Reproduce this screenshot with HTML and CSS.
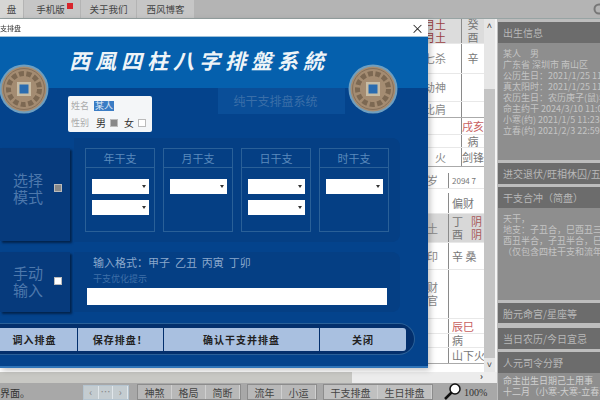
FILE: index.html
```html
<!DOCTYPE html>
<html lang="zh-CN">
<head>
    <meta charset="UTF-8">
    <title>西风四柱八字排盘系统</title>
    <link rel="stylesheet" href="styles.css">
</head>
<body>
    <svg class="defs" width="0" height="0">
        <defs>
            <symbol id="coin" viewBox="0 0 50 50">
                <circle cx="25" cy="25" r="24.500" fill="#6f9fc0"/>
                <circle cx="25" cy="25" r="22.500" fill="#a48c72"/>
                <circle cx="25" cy="25" r="20.500" fill="none" stroke="#86705a" stroke-width="1"/>
                <circle cx="25" cy="25" r="15.500" fill="none" stroke="#7c6852" stroke-width="5" stroke-dasharray="5 2.500"/>
                <circle cx="25" cy="25" r="11" fill="#a48c72"/>
                <rect x="18" y="18" width="14" height="14" fill="#c8bca4"/>
                <rect x="20.500" y="20.500" width="9" height="9" fill="#2a6cb0"/>
            </symbol>
        </defs>
    </svg>

    <div class="app">
        <nav class="tabs">
            <span class="tab tab-first">盘</span>
            <span class="tab tab-phone">手机版<i class="hot"></i></span>
            <span class="tab tab-about">关于我们</span>
            <span class="tab tab-blog">西风博客</span>
            <svg class="gear" width="8" height="12" viewBox="0 0 8 12">
                <circle cx="7" cy="6" r="4.500" fill="none" stroke="#777" stroke-width="2"/>
            </svg>
        </nav>

        <div class="columns">
            <div class="work">
                <main class="main">
                    <div class="sheet">
                        <div class="chart">
                            <div class="row row-head"><span class="cell-a">月土<br>月土</span><span class="cell-b">癸<br>酉</span></div>
                            <div class="row row-1"><span class="cell-a">七杀</span><span class="cell-b">辛</span></div>
                            <div class="row row-2"><span class="cell-a">劫神</span><span class="cell-b"></span></div>
                            <div class="row row-3"><span class="cell-a">比肩</span><span class="cell-b"></span></div>
                            <div class="row row-4"><span class="cell-a"></span><span class="cell-b red">戌亥</span></div>
                            <div class="row row-5"><span class="cell-a"></span><span class="cell-b">病</span></div>
                            <div class="row row-6"><span class="cell-a">火</span><span class="cell-b">剑锋</span></div>
                        </div>
                        <div class="chart chart-low">
                            <div class="row row-year"><span class="cell-a">岁</span><span class="cell-b small">2094 7</span></div>
                            <div class="row row-7"><span class="cell-a"></span><span class="cell-b">偏财</span></div>
                            <div class="row row-8"><span class="cell-a">土</span><span class="cell-b split">丁<br>酉<em>阴<br>阴</em></span></div>
                            <div class="row row-9"><span class="cell-a">印</span><span class="cell-b">辛 桑</span></div>
                            <div class="row row-10"><span class="cell-a">财<br>官</span><span class="cell-b"></span></div>
                            <div class="row row-11"><span class="cell-a"></span><span class="cell-b red">辰巳</span></div>
                            <div class="row row-12"><span class="cell-a"></span><span class="cell-b">病</span></div>
                            <div class="row row-13"><span class="cell-a"></span><span class="cell-b">山下火</span></div>
                        </div>
                    </div>
                    <div class="vscroll"><b>˄</b><i></i><b>˅</b></div>
                </main>

                <div class="hscroll"><i></i><b>›</b></div>

                <footer class="status">
                    <span class="status-msg">界面。</span>
                    <div class="pager"><span>‹</span><span>…</span><span>›</span></div>
                    <div class="btn-group group-a"><span>神煞</span><span>格局</span><span>简断</span></div>
                    <div class="btn-group group-b"><span>流年</span><span>小运</span></div>
                    <div class="btn-group group-c"><span>干支排盘</span><span>生日排盘</span></div>
                    <svg class="zoom-icon" width="18" height="17" viewBox="0 0 18 17">
                        <line x1="1" y1="16" x2="8" y2="9" stroke="#111" stroke-width="2.500"/>
                        <circle cx="11" cy="6" r="5" fill="#fff" stroke="#111" stroke-width="1.500"/>
                    </svg>
                    <span class="zoom-value">100%</span>
                </footer>
            </div>

            <aside class="side">
                <section class="group">
                    <h3>出生信息</h3>
                    <div class="group-text birth">
                        某人　男<br>
                        广东省 深圳市 南山区<br>
                        公历生日：2021/1/25 11:00<br>
                        真太阳时：2021/1/25 11:00<br>
                        农历生日：农历庚子(鼠)年<br>
                        命主约干 2024/3/10 11:00<br>
                        小寒(约) 2021/1/5 11:23<br>
                        立春(约) 2021/2/3 22:59
                    </div>
                </section>
                <section class="group bar"><h3>进交退伏/旺相休囚/五行</h3></section>
                <section class="group">
                    <h3>干支合冲（简盘）</h3>
                    <div class="group-text clash">
                        天干，<br>
                        地支：子丑合，巳酉丑三合<br>
                        酉丑半合，子丑半合，巳<br>
                        （仅包含四柱干支和流年）
                    </div>
                </section>
                <section class="group bar bar-gap"><h3>胎元命宫/星座等</h3></section>
                <section class="group bar"><h3>当日农历/今日宜忌</h3></section>
                <section class="group">
                    <h3>人元司令分野</h3>
                    <div class="group-text fate">
                        命主出生日期己土用事<br>
                        十二月（小寒-大寒-立春）
                    </div>
                </section>
            </aside>
        </div>
    </div>

    <!-- 排盘窗口 -->
    <div class="dialog">
        <div class="dialog-title"><span>支排盘</span><span class="dialog-close">×</span></div>
        <div class="dialog-body">
            <svg class="coin coin-left"><use href="#coin"/></svg>
            <svg class="coin coin-right"><use href="#coin"/></svg>

            <header class="banner"><h1>西風四柱八字排盤系統</h1></header>

            <div class="info-row">
                <div class="person">
                    <div class="person-line"><label>姓名</label><span class="person-name">某人</span></div>
                    <div class="person-line"><label>性别</label><span class="gender">男<i class="check on"></i>女<i class="check"></i></span></div>
                </div>
                <div class="mode-name">纯干支排盘系统</div>
            </div>

            <div class="mode-row mode-select">
                <div class="mode-tile"><span>选择<br>模式</span><i class="check on"></i></div>
                <div class="mode-panel pillars">
                    <div class="pillar"><h4>年干支</h4><div class="pillar-body"><div class="select"></div><div class="select"></div></div></div>
                    <div class="pillar"><h4>月干支</h4><div class="pillar-body"><div class="select"></div></div></div>
                    <div class="pillar"><h4>日干支</h4><div class="pillar-body"><div class="select"></div><div class="select"></div></div></div>
                    <div class="pillar"><h4>时干支</h4><div class="pillar-body"><div class="select"></div></div></div>
                </div>
            </div>

            <div class="mode-row mode-manual">
                <div class="mode-tile"><span>手动<br>输入</span><i class="check"></i></div>
                <div class="mode-panel manual">
                    <p class="format">输入格式：甲子&nbsp; 乙丑&nbsp; 丙寅&nbsp; 丁卯</p>
                    <p class="hint">干支优化提示</p>
                    <div class="text-input"></div>
                </div>
            </div>

            <div class="actions">
                <button class="act-load">调入排盘</button>
                <button class="act-save">保存排盘！</button>
                <button class="act-ok">确认干支并排盘</button>
                <button class="act-close">关闭</button>
            </div>
        </div>
    </div>
</body>
</html>
```

FILE: styles.css
```css
* {
    box-sizing: border-box;
}
html, body {
    margin: 0;
    height: 100%;
}
body {
    width: 600px;
    height: 400px;
    overflow: hidden;
    position: relative;
    font-family: "Noto Sans CJK SC", "Liberation Sans", sans-serif;
    background-color: #a8a8a8;
    filter: blur(0.5px);
}
.defs {
    position: absolute;
}
.app {
    display: flex;
    flex-direction: column;
    height: 400px;
}
.columns {
    display: flex;
    height: 381px;
}
.work {
    display: flex;
    flex-direction: column;
    width: 497px;
}

/* top tabs */
.tabs {
    display: flex;
    height: 19px;
    background-color: #b4b4b4;
    border-bottom: 1px solid #98a4a4;
}
.tab {
    display: flex;
    align-items: center;
    justify-content: center;
    height: 18px;
    margin-right: 1px;
    font-size: 9.5px;
    color: #444;
    background-color: #c6c6c6;
}
.tab-first { width: 23px; background-color: #d6d6d4; }
.tab-phone { width: 56px; padding-left: 5px; }
.tab-about { width: 55px; }
.tab-blog { width: 57px; }
.hot {
    width: 6px;
    height: 6px;
    margin: -6px 0 0 2px;
    background-color: #d8242c;
}
.gear {
    margin: 3px 0 0 auto;
}

/* sheet behind the dialog */
.main {
    display: flex;
    height: 353px;
    padding-left: 428px;
    background-color: #fff;
}
.sheet {
    width: 56px;
    background-color: #fff;
    font-size: 11px;
    color: #777;
    overflow: hidden;
}
.chart {
    border-bottom: 1px solid #aaa;
    margin-bottom: 6px;
}
.row {
    display: flex;
    border-bottom: 1px solid #e8e8e8;
    line-height: 13px;
    align-items: center;
}
.cell-a {
    width: 33px;
    height: 100%;
    display: flex;
    align-items: center;
    justify-content: flex-end;
    padding-right: 15px;
    text-align: right;
    font-size: 11px;
    color: #888;
    white-space: nowrap;
    overflow: hidden;
}
.cell-b {
    width: 23px;
    height: 100%;
    display: flex;
    align-items: center;
    justify-content: center;
    border-left: 1px solid #8a8a8a;
    text-align: center;
    overflow: hidden;
    white-space: nowrap;
}
.row-head { height: 25px; background-color: #dcdcdc; }
.row-head .cell-a { color: #9a4040; }
.row-1 { height: 30px; }
.row-2 { height: 28px; }
.row-3 { height: 16px; border-bottom-color: #aaa; }
.row-4 { height: 17px; }
.row-5 { height: 13px; }
.row-6 { height: 18px; border-bottom: 0; }
.red { color: #c86060; }
.chart-low .cell-a { width: 20px; padding-right: 10px; }
.chart-low .cell-b { width: 36px; padding-left: 3px; justify-content: flex-start; }
.small { font-size: 8px; }
.row-year { height: 16px; }
.row-7 { height: 25px; padding-top: 4px; }
.row-8 { height: 29px; background-color: #d8d8d8; }
.split em {
    font-style: normal;
    color: #a85a5a;
    margin-left: 8px;
}
.row-9 { height: 27px; }
.row-10 { height: 49px; }
.row-11 { height: 15px; }
.row-12 { height: 14px; }
.row-13 { height: 15px; border-bottom: 0; }

.vscroll {
    display: flex;
    flex-direction: column;
    width: 13px;
    background-color: #e6e6e6;
    border-right: 2px solid #f4f4f4;
    font-size: 9px;
    text-align: center;
}
.vscroll b {
    height: 14px;
    font-weight: 400;
    color: #444;
}
.vscroll i {
    display: block;
    height: 273px;
    margin-top: 56px;
    background-color: #c4c4c4;
}
.vscroll b:last-child {
    margin-top: auto;
}

/* side column */
.side {
    display: flex;
    flex-direction: column;
    width: 103px;
    height: 381px;
    padding: 3px 0 0 1px;
    background-color: #bdbdbd;
    overflow: hidden;
}
.group {
    margin-bottom: 3px;
    flex-shrink: 0;
}
.group h3 {
    margin: 0;
    height: 21px;
    padding-left: 5px;
    font-size: 10px;
    line-height: 21px;
    font-weight: 400;
    color: #b8b8b8;
    background-color: #6c6c6c;
    white-space: nowrap;
    overflow: hidden;
}
.bar-gap {
    margin-bottom: 5px;
}
.bar-gap h3 {
    height: 20px;
}
.group-text {
    padding: 5px 0 0 5px;
    font-size: 9px;
    line-height: 11px;
    color: #c4c4c4;
    background-color: #8e8e8e;
    white-space: nowrap;
    overflow: hidden;
}
.birth { height: 117px; }
.clash { height: 92px; }
.fate { height: 27px; padding-top: 2px; color: #d0d0d0; }

.hscroll {
    display: flex;
    justify-content: space-between;
    height: 11px;
    background-color: #ececec;
    font-size: 9px;
    line-height: 10px;
}
.hscroll i {
    display: block;
    width: 352px;
    background-color: #c8c8c4;
}
.hscroll b {
    margin-right: 14px;
    color: #444;
}

/* status bar */
.status {
    display: flex;
    align-items: flex-end;
    height: 17px;
    font-size: 10px;
    color: #333;
    background-color: #a8a8a8;
}
.status-msg {
    width: 83px;
    line-height: 15px;
}
.pager {
    display: flex;
    width: 46px;
    height: 15px;
    margin-right: 8px;
    background-color: #c4ccd0;
    border: 1px solid #b4c4d0;
}
.pager span {
    flex: 1;
    text-align: center;
    line-height: 12px;
    color: #888;
    border-right: 1px solid #e0e6ea;
}
.btn-group {
    display: flex;
    height: 16px;
    margin-right: 6px;
    border: 1px solid #8c8c8c;
    background-color: #b8b8b8;
}
.btn-group span {
    line-height: 15px;
    color: #444;
    border-right: 1px solid #d0d0d0;
    text-align: center;
}
.group-a span { width: 34px; }
.group-b span { width: 34px; }
.group-c span { width: 54px; background-color: #c0c0c0; }
.zoom-icon {
    margin: 0 2px 0 5px;
}
.zoom-value {
    font-family: "Liberation Serif", serif;
    font-size: 10px;
    line-height: 15px;
}

/* dialog, it lies over the page */
.dialog {
    position: absolute;
    left: 0;
    top: 19px;
    width: 428px;
    height: 349px;
    box-shadow: 2px 2px 6px rgba(0, 0, 0, 0.25);
}
.dialog-title {
    display: flex;
    justify-content: space-between;
    align-items: center;
    height: 18px;
    padding-right: 4px;
    font-size: 7px;
    color: #333;
    background-color: #fff;
    border-bottom: 1px solid #9fc0d8;
}
.dialog-close {
    font-size: 13px;
    color: #222;
}
.dialog-body {
    position: relative;
    height: 331px;
    background-color: #04438c;
    border-bottom: 2px solid #2f74b8;
}
.coin {
    position: absolute;
    top: 27px;
    width: 50px;
    height: 50px;
}
.coin-left { left: -1px; }
.coin-right { left: 348px; }
.banner {
    height: 51px;
    background-color: #0560ad;
}
.banner h1 {
    margin: 0;
    padding: 8px 30px 0 0;
    text-align: center;
    font-size: 21px;
    line-height: 30px;
    font-weight: 700;
    font-style: italic;
    letter-spacing: 5px;
    color: #eef4f8;
}
.info-row {
    display: flex;
    align-items: flex-start;
    height: 60px;
    padding-left: 68px;
}
.person {
    width: 84px;
    height: 36px;
    margin-top: 8px;
    padding: 1px 0 0 3px;
    background-color: #f4f6f8;
    border-radius: 2px;
}
.person-line {
    display: flex;
    align-items: center;
    height: 17px;
    font-size: 10px;
}
.person-line label {
    width: 21px;
    color: #aaa;
    font-size: 9px;
}
.person-name {
    padding: 0 1px;
    margin-left: 2px;
    line-height: 10px;
    font-size: 9px;
    color: #e0eaf4;
    background-color: #3a7cc4;
}
.gender {
    display: flex;
    align-items: center;
    margin-left: 6px;
    color: #333;
}
.check {
    display: block;
    width: 8px;
    height: 8px;
    margin: 0 6px 0 4px;
    background-color: #fff;
    border: 1px solid #bbb;
}
.check.on {
    background-color: #888;
}
.mode-name {
    width: 127px;
    height: 26px;
    margin-left: 66px;
    padding-right: 12px;
    text-align: center;
    font-size: 12px;
    line-height: 26px;
    color: #3a6ea8;
    background-color: #0a4e98;
}
.mode-row {
    display: flex;
}
.mode-select {
    height: 104px;
}
.mode-manual {
    height: 71px;
}
.mode-tile {
    display: flex;
    align-items: center;
    gap: 11px;
    width: 70px;
    padding-left: 13px;
    font-size: 15px;
    line-height: 17px;
    text-align: center;
    color: #4d78ac;
    background-color: #063a7c;
    box-shadow: 2px 2px 2px #02244e;
}
.mode-select .mode-tile { height: 93px; padding-bottom: 14px; }
.mode-manual .mode-tile { height: 60px; padding-bottom: 3px; }
.mode-tile .check {
    margin: 0;
    flex-shrink: 0;
}
.mode-panel {
    width: 326px;
    margin-left: 4px;
    background-color: #053f84;
    border-radius: 0 8px 8px 0;
}
.pillars {
    display: flex;
    gap: 8px;
    height: 104px;
    margin-top: -10px;
    padding: 10px 0 0 11px;
}
.pillar {
    width: 70px;
    height: 84px;
    border: 1px solid #2a6098;
}
.pillar h4 {
    margin: 0;
    height: 19px;
    text-align: center;
    font-size: 11px;
    line-height: 19px;
    font-weight: 400;
    color: #5a8abc;
    border-bottom: 1px solid #2a6098;
}
.pillar-body {
    padding: 11px 0 0 6px;
}
.select {
    position: relative;
    width: 57px;
    height: 15px;
    margin-bottom: 6px;
    background-color: #fff;
}
.select::after {
    content: "";
    position: absolute;
    right: 3px;
    top: 6px;
    border: 2px solid transparent;
    border-top: 3px solid #333;
}
.manual {
    height: 60px;
    padding: 3px 0 0 13px;
}
.format {
    margin: 0 0 0 6px;
    font-size: 11px;
    line-height: 15px;
    color: #8aa8cc;
}
.hint {
    margin: 3px 0 3px 6px;
    font-size: 9px;
    line-height: 12px;
    color: #3f70a8;
}
.text-input {
    width: 300px;
    height: 17px;
    background-color: #fff;
}
.actions {
    display: flex;
    gap: 1px;
    width: 415px;
    height: 32px;
    padding: 4px 8px 4px 0;
    background-color: #032f6c;
    border: 1px solid #2a6098;
    border-left: 0;
    border-radius: 0 16px 16px 0;
}
.actions button {
    height: 23px;
    padding: 0;
    border: 0;
    border-radius: 0;
    font-family: "Noto Sans CJK SC", "Liberation Serif", serif;
    font-size: 10px;
    font-weight: 700;
    letter-spacing: 1px;
    color: #222;
    background-color: #a9c0e0;
}
.actions .act-load { width: 77px; padding-right: 8px; }
.act-save { width: 85px; }
.act-ok { width: 156px; }
.actions .act-close { width: 86px; border-radius: 0 3px 3px 0; }
```
